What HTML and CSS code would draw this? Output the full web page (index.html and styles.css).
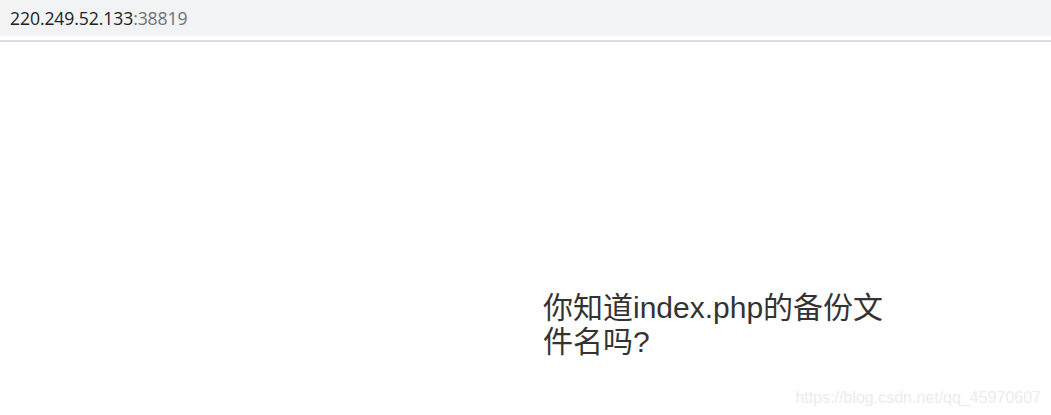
FILE: index.html
```html
<!DOCTYPE html>
<html lang="zh">
<head>
<meta charset="utf-8">
<title>220.249.52.133:38819</title>
<link rel="stylesheet" href="styles.css">
</head>
<body>
<div class="addr-bar">
  <span class="host">220.249.52.133</span><span class="port">:38819</span>
</div>
<div class="addr-line"></div>
<main class="page">
  <p class="question">你知道index.php的备份文件名吗?</p>
</main>
<div class="watermark">https://blog.csdn.net/qq_45970607</div>
</body>
</html>
```
FILE: styles.css
```css
html, body {
  margin: 0;
  padding: 0;
  background: #ffffff;
  height: 100%;
  overflow: hidden;
}
body {
  position: relative;
  font-family: "Liberation Sans", Arial, "Noto Sans CJK SC", sans-serif;
}
.addr-bar {
  height: 36px;
  background: #f1f3f4;
  display: flex;
  align-items: center;
  padding-left: 10px;
  font-family: "Open Sans", "Noto Sans", sans-serif;
  font-size: 17.6px;
  letter-spacing: -0.1px;
}
.host { color: #202124; }
.port { color: #6f7275; }
.addr-line {
  height: 2px;
  margin-top: 4px;
  background: #dadce0;
}
.page {
  padding-top: 249px;
  padding-left: 543px;
}
.question {
  margin: 0;
  width: 350px;
  font-size: 30px;
  line-height: 34px;
  color: #333333;
  font-family: "Liberation Sans", Arial, "Noto Sans CJK SC", sans-serif;
}
.watermark {
  position: absolute;
  right: 10px;
  bottom: 8px;
  font-size: 16px;
  color: #ececec;
  font-family: "Liberation Sans", Arial, sans-serif;
}
```
